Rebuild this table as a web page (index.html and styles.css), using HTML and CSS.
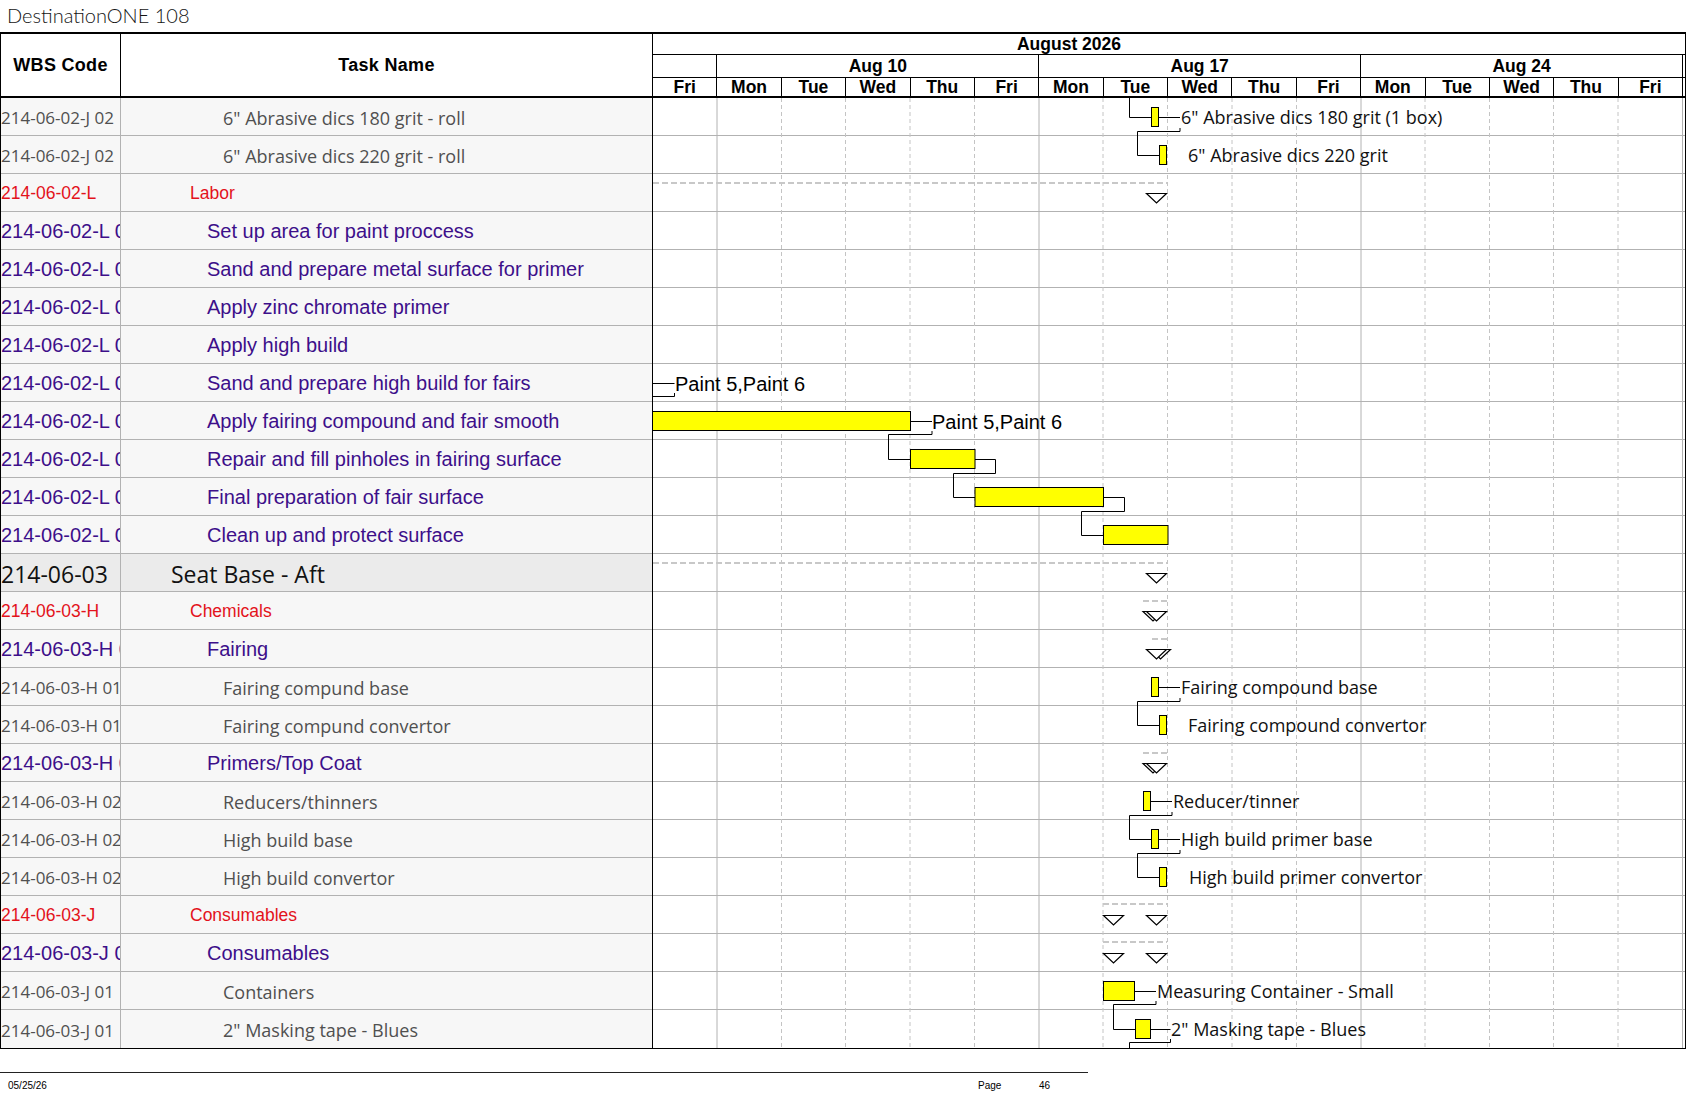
FILE: index.html
```html
<!DOCTYPE html>
<html lang="en">
<head>
<meta charset="utf-8">
<title>DestinationONE 108</title>
<link rel="stylesheet" href="styles.css">
</head>
<body>
<div class="title">DestinationONE 108</div>
<div class="sheet">
  <div class="left">
    <div class="lhead">
      <div class="hw">WBS Code</div>
      <div class="hn">Task Name</div>
    </div>
    <div class="rows">
      <div class="row gray"><div class="wbs">214-06-02-J 02</div><div class="name">6" Abrasive dics 180 grit - roll</div></div>
      <div class="row gray"><div class="wbs">214-06-02-J 02</div><div class="name">6" Abrasive dics 220 grit - roll</div></div>
      <div class="row red"><div class="wbs">214-06-02-L</div><div class="name">Labor</div></div>
      <div class="row purple"><div class="wbs">214-06-02-L 01</div><div class="name">Set up area for paint proccess</div></div>
      <div class="row purple"><div class="wbs">214-06-02-L 02</div><div class="name">Sand and prepare metal surface for primer</div></div>
      <div class="row purple"><div class="wbs">214-06-02-L 03</div><div class="name">Apply zinc chromate primer</div></div>
      <div class="row purple"><div class="wbs">214-06-02-L 04</div><div class="name">Apply high build</div></div>
      <div class="row purple"><div class="wbs">214-06-02-L 05</div><div class="name">Sand and prepare high build for fairs</div></div>
      <div class="row purple"><div class="wbs">214-06-02-L 06</div><div class="name">Apply fairing compound and fair smooth</div></div>
      <div class="row purple"><div class="wbs">214-06-02-L 07</div><div class="name">Repair and fill pinholes in fairing surface</div></div>
      <div class="row purple"><div class="wbs">214-06-02-L 08</div><div class="name">Final preparation of fair surface</div></div>
      <div class="row purple"><div class="wbs">214-06-02-L 09</div><div class="name">Clean up and protect surface</div></div>
      <div class="row big"><div class="wbs">214-06-03</div><div class="name">Seat Base - Aft</div></div>
      <div class="row red"><div class="wbs">214-06-03-H</div><div class="name">Chemicals</div></div>
      <div class="row purple"><div class="wbs">214-06-03-H 01</div><div class="name">Fairing</div></div>
      <div class="row gray"><div class="wbs">214-06-03-H 01</div><div class="name">Fairing compund base</div></div>
      <div class="row gray"><div class="wbs">214-06-03-H 01</div><div class="name">Fairing compund convertor</div></div>
      <div class="row purple"><div class="wbs">214-06-03-H 02</div><div class="name">Primers/Top Coat</div></div>
      <div class="row gray"><div class="wbs">214-06-03-H 02</div><div class="name">Reducers/thinners</div></div>
      <div class="row gray"><div class="wbs">214-06-03-H 02</div><div class="name">High build base</div></div>
      <div class="row gray"><div class="wbs">214-06-03-H 02</div><div class="name">High build convertor</div></div>
      <div class="row red"><div class="wbs">214-06-03-J</div><div class="name">Consumables</div></div>
      <div class="row purple"><div class="wbs">214-06-03-J 01</div><div class="name">Consumables</div></div>
      <div class="row gray"><div class="wbs">214-06-03-J 01</div><div class="name">Containers</div></div>
      <div class="row gray"><div class="wbs">214-06-03-J 01</div><div class="name">2" Masking tape - Blues</div></div>
    </div>
  </div>
  <div class="right">
    <div class="thead">
      <div class="month"><span>August 2026</span></div>
      <div class="weeks">
        <div class="wk"></div>
        <div class="wk">Aug 10</div>
        <div class="wk">Aug 17</div>
        <div class="wk">Aug 24</div>
        <div class="wk end"></div>
      </div>
      <div class="days">
        <div class="d">Fri</div>
        <div class="d">Mon</div><div class="d">Tue</div><div class="d">Wed</div><div class="d">Thu</div><div class="d">Fri</div>
        <div class="d">Mon</div><div class="d">Tue</div><div class="d">Wed</div><div class="d">Thu</div><div class="d">Fri</div>
        <div class="d">Mon</div><div class="d">Tue</div><div class="d">Wed</div><div class="d">Thu</div><div class="d">Fri</div>
        <div class="d end"></div>
      </div>
    </div>
    <svg class="chart" width="1032" height="950" viewBox="0 0 1032 950" xmlns="http://www.w3.org/2000/svg">
      <g class="hlines">
        <line x1="0" y1="37.5" x2="1032" y2="37.5"/>
        <line x1="0" y1="75.5" x2="1032" y2="75.5"/>
        <line x1="0" y1="113.5" x2="1032" y2="113.5"/>
        <line x1="0" y1="151.5" x2="1032" y2="151.5"/>
        <line x1="0" y1="189.5" x2="1032" y2="189.5"/>
        <line x1="0" y1="227.5" x2="1032" y2="227.5"/>
        <line x1="0" y1="265.5" x2="1032" y2="265.5"/>
        <line x1="0" y1="303.5" x2="1032" y2="303.5"/>
        <line x1="0" y1="341.5" x2="1032" y2="341.5"/>
        <line x1="0" y1="379.5" x2="1032" y2="379.5"/>
        <line x1="0" y1="417.5" x2="1032" y2="417.5"/>
        <line x1="0" y1="455.5" x2="1032" y2="455.5"/>
        <line x1="0" y1="493.5" x2="1032" y2="493.5"/>
        <line x1="0" y1="531.5" x2="1032" y2="531.5"/>
        <line x1="0" y1="569.5" x2="1032" y2="569.5"/>
        <line x1="0" y1="607.5" x2="1032" y2="607.5"/>
        <line x1="0" y1="645.5" x2="1032" y2="645.5"/>
        <line x1="0" y1="683.5" x2="1032" y2="683.5"/>
        <line x1="0" y1="721.5" x2="1032" y2="721.5"/>
        <line x1="0" y1="759.5" x2="1032" y2="759.5"/>
        <line x1="0" y1="797.5" x2="1032" y2="797.5"/>
        <line x1="0" y1="835.5" x2="1032" y2="835.5"/>
        <line x1="0" y1="873.5" x2="1032" y2="873.5"/>
        <line x1="0" y1="911.5" x2="1032" y2="911.5"/>
      </g>
      <g class="dlines">
        <line x1="128.5" y1="0" x2="128.5" y2="950"/>
        <line x1="192.5" y1="0" x2="192.5" y2="950"/>
        <line x1="257" y1="0" x2="257" y2="950"/>
        <line x1="321.5" y1="0" x2="321.5" y2="950"/>
        <line x1="450" y1="0" x2="450" y2="950"/>
        <line x1="514.5" y1="0" x2="514.5" y2="950"/>
        <line x1="579" y1="0" x2="579" y2="950"/>
        <line x1="643.5" y1="0" x2="643.5" y2="950"/>
        <line x1="772" y1="0" x2="772" y2="950"/>
        <line x1="836.5" y1="0" x2="836.5" y2="950"/>
        <line x1="900.5" y1="0" x2="900.5" y2="950"/>
        <line x1="965" y1="0" x2="965" y2="950"/>
      </g>
      <g class="wlines">
        <line x1="64" y1="0" x2="64" y2="950"/>
        <line x1="386" y1="0" x2="386" y2="950"/>
        <line x1="708" y1="0" x2="708" y2="950"/>
        <line x1="1029.5" y1="0" x2="1029.5" y2="950"/>
      </g>
      <g class="sum">
        <line x1="0" y1="85" x2="514" y2="85"/>
        <line x1="0" y1="465" x2="514" y2="465"/>
        <line x1="490" y1="503" x2="514" y2="503"/>
        <line x1="499" y1="541" x2="514" y2="541"/>
        <line x1="490" y1="655" x2="514" y2="655"/>
        <line x1="450" y1="806" x2="514" y2="806"/>
        <line x1="450" y1="844" x2="514" y2="844"/>
      </g>
      <g class="tri">
        <path d="M493.5 95.5h20l-10 9.5z"/>
        <path d="M493.5 475.5h20l-10 9.5z"/>
        <path d="M490 513.5h20l-10 9.5z"/>
        <path d="M493.5 513.5h20l-10 9.5z"/>
        <path d="M497.5 551.5h20l-10 9.5z"/>
        <path d="M493.5 551.5h20l-10 9.5z"/>
        <path d="M490 665.5h20l-10 9.5z"/>
        <path d="M493.5 665.5h20l-10 9.5z"/>
        <path d="M450.5 817.5h20l-10 9.5z"/>
        <path d="M493.5 817.5h20l-10 9.5z"/>
        <path d="M450.5 855.5h20l-10 9.5z"/>
        <path d="M493.5 855.5h20l-10 9.5z"/>
      </g>
      <g class="link">
        <polyline points="476.5,0 476.5,19.5 498.5,19.5"/>
        <polyline points="505.5,19.5 527,19.5"/>
        <polyline points="527,30 527,33.5 484.5,33.5 484.5,57.5 506.5,57.5"/>
        <polyline points="0,285.5 21.5,285.5"/>
        <polyline points="21.5,295 21.5,298.5 0,298.5"/>
        <polyline points="257.5,323.5 279,323.5"/>
        <polyline points="279,333 279,336.5 235.5,336.5 235.5,361.5 257.5,361.5"/>
        <polyline points="322,361.5 342.5,361.5 342.5,375.5 300.5,375.5 300.5,399.5 322,399.5"/>
        <polyline points="451,399.5 471.5,399.5 471.5,413.5 428.5,413.5 428.5,437.5 450.5,437.5"/>
        <polyline points="505.5,589.5 527,589.5"/>
        <polyline points="527,600 527,603.5 484.5,603.5 484.5,627.5 506.5,627.5"/>
        <polyline points="497.5,703.5 519,703.5"/>
        <polyline points="519,714 519,717.5 476.5,717.5 476.5,741.5 498.5,741.5"/>
        <polyline points="505.5,741.5 527,741.5"/>
        <polyline points="527,752 527,755.5 484.5,755.5 484.5,779.5 506.5,779.5"/>
        <polyline points="481.5,893.5 503,893.5"/>
        <polyline points="503,903 503,906.5 460.5,906.5 460.5,931.5 482.5,931.5"/>
        <polyline points="497.5,931.5 517.5,931.5"/>
        <polyline points="517.5,941 517.5,944.5 476.5,944.5 476.5,950"/>
      </g>
      <g class="bar">
        <rect x="498.5" y="9.5" width="7" height="19"/>
        <rect x="506.5" y="47.5" width="7" height="19"/>
        <rect x="-1" y="313.5" width="258.5" height="19"/>
        <rect x="257.5" y="351.5" width="64.5" height="19"/>
        <rect x="322" y="389.5" width="128.5" height="19"/>
        <rect x="450.5" y="427.5" width="64.5" height="19"/>
        <rect x="498.5" y="579.5" width="7" height="19"/>
        <rect x="506.5" y="617.5" width="7" height="19"/>
        <rect x="490.5" y="693.5" width="7" height="19"/>
        <rect x="498.5" y="731.5" width="7" height="19"/>
        <rect x="506.5" y="769.5" width="7" height="19"/>
        <rect x="450.5" y="883.5" width="31" height="19"/>
        <rect x="482.5" y="921.5" width="15" height="19"/>
      </g>
      <g class="lbl">
        <text x="528" y="26">6" Abrasive dics 180 grit (1 box)</text>
        <text x="535" y="64">6" Abrasive dics 220 grit</text>
        <text x="528" y="596">Fairing compound base</text>
        <text x="535" y="634">Fairing compound convertor</text>
        <text x="520" y="710">Reducer/tinner</text>
        <text x="528" y="748">High build primer base</text>
        <text x="536" y="786">High build primer convertor</text>
        <text x="504" y="900">Measuring Container - Small</text>
        <text x="518" y="938">2" Masking tape - Blues</text>
      </g>
      <g class="lbl-a">
        <text x="22" y="293">Paint 5,Paint 6</text>
        <text x="279" y="331">Paint 5,Paint 6</text>
      </g>
    </svg>
  </div>
</div>
<div class="footer">
  <span class="date">05/25/26</span>
  <span class="page">Page</span>
  <span class="num">46</span>
</div>
</body>
</html>
```
FILE: styles.css
```css
* { box-sizing: border-box; }

body {
  margin: 0;
  width: 1687px;
  height: 1097px;
  overflow: hidden;
  background: #ffffff;
  font-family: "Liberation Sans", Arial, sans-serif;
  color: #000;
}

.title {
  height: 32px;
  padding-left: 7px;
  font-family: Lato, "Liberation Sans", sans-serif;
  font-weight: 300;
  font-size: 20px;
  line-height: 30px;
  color: #141414;
}

.sheet {
  display: flex;
  width: 1686px;
  border-top: 2px solid #000;
  border-left: 1px solid #000;
  border-right: 1px solid #000;
  border-bottom: 1px solid #000;
}

.left {
  width: 652px;
  flex: none;
  border-right: 1px solid #000;
}

.lhead {
  display: flex;
  height: 64px;
  border-bottom: 2px solid #000;
  font-weight: bold;
  font-size: 18px;
  letter-spacing: 0.3px;
}

.hw {
  width: 120px;
  border-right: 1px solid #000;
  display: flex;
  align-items: center;
  justify-content: center;
}

.hn {
  flex: 1;
  display: flex;
  align-items: center;
  justify-content: center;
}

.rows {
  display: flex;
  flex-direction: column;
}

.row {
  display: flex;
  height: 38px;
  border-bottom: 1px solid #b2b2b2;
  background: #f7f7f7;
  white-space: nowrap;
}

.row:last-child {
  border-bottom: none;
}

.wbs {
  width: 120px;
  flex: none;
  overflow: hidden;
  border-right: 1px solid #b2b2b2;
  display: flex;
  align-items: center;
  padding-top: 2px;
}

.name {
  flex: 1;
  overflow: hidden;
  display: flex;
  align-items: center;
  padding-top: 2px;
}

.gray {
  font-family: "Open Sans", "Liberation Sans", sans-serif;
  font-size: 18px;
  color: #505050;
}
.gray .wbs { font-size: 17px; }
.gray .name { padding-left: 102px; }

.red {
  font-size: 17.5px;
  color: #e3121b;
}
.red .name { padding-left: 69px; }

.purple {
  font-size: 20px;
  color: #3d0f8a;
}
.purple .name { padding-left: 86px; }

.big {
  font-family: "Open Sans", "Liberation Sans", sans-serif;
  font-size: 23px;
  color: #111;
  background: #ebebeb;
}
.big .name { padding-left: 50px; }

.right {
  width: 1032px;
  flex: none;
  display: flex;
  flex-direction: column;
}

.thead {
  height: 64px;
  border-bottom: 2px solid #000;
  font-weight: bold;
  font-size: 17.5px;
  display: flex;
  flex-direction: column;
}

.month {
  height: 21px;
  border-bottom: 1px solid #000;
  padding-right: 200px;
  text-align: center;
  line-height: 20px;
}

.weeks {
  height: 23px;
  display: grid;
  grid-template-columns: 64.375px 321.875px 321.875px 321.875px 2px;
  border-bottom: 1px solid #000;
}

.wk {
  border-right: 1px solid #000;
  text-align: center;
  line-height: 22px;
}

.days {
  flex: 1;
  display: grid;
  grid-template-columns: repeat(16, 64.375px) 2px;
}

.d {
  border-right: 1px solid #000;
  text-align: center;
  line-height: 19px;
}

.end { border-right: none; }

.chart {
  display: block;
  background: #fff;
}

.hlines line { stroke: #b2b2b2; stroke-width: 1; }
.dlines line { stroke: #c4c4c4; stroke-width: 1; stroke-dasharray: 4 3; }
.wlines line { stroke: #b2b2b2; stroke-width: 1; }
.sum line { stroke: #c8c8c8; stroke-width: 2; stroke-dasharray: 6 3; }
.tri path { fill: #fff; stroke: #000; stroke-width: 1.2; }
.link polyline { fill: none; stroke: #000; stroke-width: 1; }
.bar rect { fill: #ffff00; stroke: #000; stroke-width: 1; }

.lbl text {
  font-family: "Open Sans", "Liberation Sans", sans-serif;
  font-size: 18px;
  fill: #111;
}

.lbl-a text {
  font-family: "Liberation Sans", Arial, sans-serif;
  font-size: 20px;
  fill: #000;
}

.footer {
  display: grid;
  grid-template-columns: 970px 61px auto;
  width: 1088px;
  margin-top: 23px;
  padding-top: 7px;
  padding-left: 8px;
  border-top: 1px solid #222;
  font-size: 10px;
  line-height: 12px;
  color: #000;
}
```
